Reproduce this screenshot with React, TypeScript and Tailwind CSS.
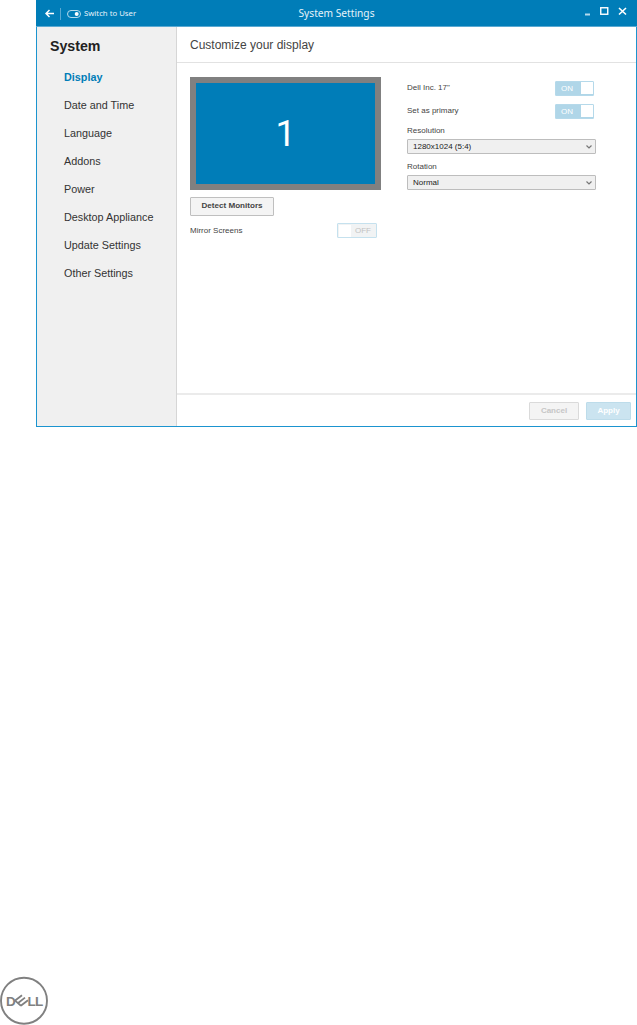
// System settings window, display page, with the brand mark at the foot of the sheet.

interface ToggleProps {
  on: boolean
}

interface SelectFieldProps {
  label: string
  value: string
}

const NAV_ITEMS = [
  'Display',
  'Date and Time',
  'Language',
  'Addons',
  'Power',
  'Desktop Appliance',
  'Update Settings',
  'Other Settings',
]

export default function App() {
  return (
    <div className="flex h-[1025px] w-[637px] flex-col justify-between overflow-hidden bg-white font-['Liberation_Sans',Arial,sans-serif] text-[#444444]">
      <div className="ml-9 flex h-[427px] flex-col border border-t-0 border-[#1b94cf]">
        <TitleBar />
        <div className="flex min-h-0 flex-1">
          <Sidebar />
          <main className="flex flex-1 flex-col">
            <h2 className="h-[36px] border-b border-[#e2e2e2] pl-[13px] pt-[9px] text-[12px] leading-[18px] whitespace-nowrap">
              Customize your display
            </h2>
            <DisplayPanel />
            <footer className="flex h-[33px] justify-end gap-[7px] border-t-2 border-[#ebebeb] pt-[7px] pr-[5px]">
              <button className="h-[18px] w-[50px] rounded-[1px] border border-[#dadada] bg-[#f4f4f4] text-[8px] font-bold text-[#c6c6c6]">
                Cancel
              </button>
              <button className="h-[18px] w-[45px] rounded-[1px] border border-[#bddcea] bg-[#cbe4f0] text-[8px] font-bold text-white">
                Apply
              </button>
            </footer>
          </main>
        </div>
      </div>
      <DellLogo />
    </div>
  )
}

function TitleBar() {
  return (
    <header className="-mx-px grid h-[27px] shrink-0 grid-cols-[1fr_auto_1fr] items-center border-b border-[#5aa9d2] bg-[#007db8] font-['Noto_Sans','Open_Sans',sans-serif] text-[#e6f3fa]">
      <div className="flex items-center pt-px pl-[9px]">
        <svg className="h-[9px] w-[9px]" viewBox="0 0 9 9" fill="none" stroke="white" strokeWidth="1.5">
          <path d="M9 4.5H1M4.5 1 1 4.5 4.5 8" />
        </svg>
        <span className="ml-[6px] h-[12px] w-px bg-[#5aa9d2]" />
        <svg className="ml-[6px] mt-px h-[8px] w-[14px]" viewBox="0 0 14 8" fill="none">
          <rect x="0.5" y="0.5" width="13" height="7" rx="3.5" stroke="#b5dbed" />
          <circle cx="9.7" cy="4" r="2" fill="white" />
        </svg>
        <span className="ml-[3px] mt-px text-[7.75px] whitespace-nowrap">Switch to User</span>
      </div>
      <h1 className="pt-px text-[10.2px]">System Settings</h1>
      <div className="flex items-center justify-end pr-[10px] pb-[4px]">
        <svg className="h-[9px] w-[42px]" viewBox="0 0 42 9" fill="none">
          <path d="M0 7.5H5" stroke="#b5dbed" strokeWidth="2" />
          <rect x="15.75" y="0.75" width="7" height="6.5" stroke="white" strokeWidth="1.4" />
          <path d="M34 1 41 7.5M41 1 34 7.5" stroke="white" strokeWidth="1.6" />
        </svg>
      </div>
    </header>
  )
}

function Sidebar() {
  return (
    <nav className="w-[140px] shrink-0 border-r border-[#d6d6d6] bg-[#f0f0f0] pl-[13px] pt-[9px]">
      <p className="h-[27px] text-[14.2px] leading-[20px] font-bold text-[#222222]">System</p>
      <ul className="pl-[14px] text-[10.8px] leading-[28px] whitespace-nowrap text-[#333333]">
        {NAV_ITEMS.map((item, i) => (
          <li key={item} className={i === 0 ? 'font-bold text-[#007db8]' : ''}>
            {item}
          </li>
        ))}
      </ul>
    </nav>
  )
}

function DisplayPanel() {
  return (
    <section className="flex flex-1 gap-[26px] pl-[13px] pt-[14px] text-[8px]">
      {/* Monitor layout */}
      <div className="w-[191px]">
        <div className="flex h-[113px] items-center justify-center border-[6px] border-[#808080] bg-[#007db8] font-['Roboto',sans-serif] text-[36px] text-white">
          1
        </div>
        <button className="mt-[7px] block h-[19px] w-[84px] rounded-[1px] border border-[#bfbfbf] bg-[#f4f4f4] text-[8.1px] font-bold text-[#444444]">
          Detect Monitors
        </button>
        <div className="mt-[7px] flex h-[15px] items-center justify-between pr-[4px]">
          <span>Mirror Screens</span>
          <Toggle on={false} />
        </div>
      </div>

      {/* Selected monitor */}
      <div className="w-[189px] pt-[3px]">
        <div className="flex h-[16px] items-center justify-between pr-[2px]">
          <span>Dell Inc. 17"</span>
          <Toggle on />
        </div>
        <div className="mt-[7px] flex h-[16px] items-center justify-between pr-[2px]">
          <span>Set as primary</span>
          <Toggle on />
        </div>
        <div className="mt-[6px] flex flex-col gap-[7px]">
          <SelectField label="Resolution" value="1280x1024 (5:4)" />
          <SelectField label="Rotation" value="Normal" />
        </div>
      </div>
    </section>
  )
}

function Toggle({ on }: ToggleProps) {
  if (on) {
    return (
      <span className="flex h-[15px] w-[39px] items-center justify-between rounded-[1px] border border-[#b5d9ea] bg-[#b0d6e8] pl-[5px] text-[8px] text-white">
        <span className="pt-px">ON</span>
        <span className="h-[12px] w-[12px] bg-white" />
      </span>
    )
  }
  return (
    <span className="flex h-[15px] w-[40px] items-center justify-between rounded-[1px] border border-[#c5e1ee] bg-[#f1f3f4] pr-[5px] pl-px text-[8px] text-[#c2c2c2]">
      <span className="h-[12px] w-[12px] bg-white" />
      <span className="pt-px">OFF</span>
    </span>
  )
}

function SelectField({ label, value }: SelectFieldProps) {
  return (
    <div>
      <p className="h-[14px] leading-[12px]">{label}</p>
      <div className="flex h-[15px] items-center justify-between rounded-[1px] border border-[#bdbdbd] bg-[#f0f0f0] pr-[3px] pl-[5px] text-[#222222]">
        <span>{value}</span>
        <svg className="h-[4px] w-[6px]" viewBox="0 0 6 4" fill="none" stroke="#777777" strokeWidth="1.2">
          <path d="m0.5 0.5 2.5 2.5 2.5-2.5" />
        </svg>
      </div>
    </div>
  )
}

function DellLogo() {
  return (
    <svg className="h-[49px] w-[49px] shrink-0" viewBox="0 0 49 49" fill="#808080">
      <circle cx="24" cy="24.7" r="23" fill="none" stroke="#808080" strokeWidth="1.9" />
      <g fontSize="13.5" fontWeight="bold">
        <text x="6" y="29.6">D</text>
        <text x="27.4" y="29.6">L</text>
        <text x="34.9" y="29.6">L</text>
      </g>
      {/* tilted E */}
      <path
        d="M14.8 24.8 22 19.2M17.8 27.2 25 21.6M20.8 29.8 28 24.2M14.8 24.4 21 29.7"
        fill="none"
        stroke="#808080"
        strokeWidth="1.8"
      />
    </svg>
  )
}
